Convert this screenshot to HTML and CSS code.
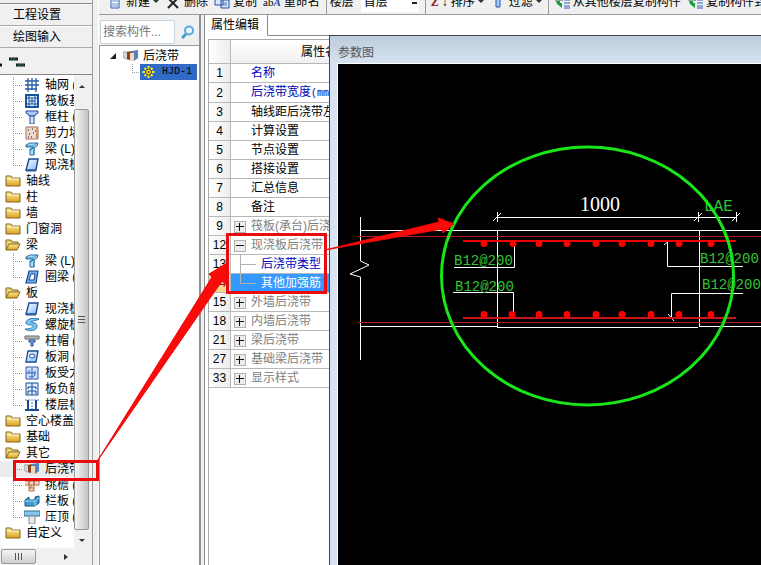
FILE: index.html
```html
<!DOCTYPE html>
<html lang="zh-CN">
<head>
<meta charset="utf-8">
<title>属性编辑</title>
<link rel="stylesheet" href="styles.css">
</head>
<body>
<svg class="defs" aria-hidden="true">
  <defs>
    <linearGradient id="gold" x1="0" y1="0" x2="0" y2="1"><stop offset="0" stop-color="#ffeea0"/><stop offset="1" stop-color="#d9a21c"/></linearGradient>
    <linearGradient id="sky" x1="0" y1="0" x2="1" y2="1"><stop offset="0" stop-color="#fff"/><stop offset="1" stop-color="#86b8f4"/></linearGradient>
    <symbol id="folder" viewBox="0 0 16 14"><path d="M1 12V2h5l1 2h8v8z" fill="url(#gold)" stroke="#80651a"/><path d="M2 5h12" stroke="#fff6c4"/></symbol>
    <symbol id="open" viewBox="0 0 16 14"><path d="M1 12V2h5l1 2h6v2" fill="#f4d775" stroke="#80651a"/><path d="M1 12l3-6h11l-3 6z" fill="url(#gold)" stroke="#80651a"/></symbol>
    <symbol id="grid" viewBox="0 0 14 14"><path d="M3 0v14M7 0v12M11 0v14M0 3h14M0 7h14M0 11h12" stroke="#2c5aa6" stroke-width="1.3" fill="none"/></symbol>
    <symbol id="raft" viewBox="0 0 14 14"><path d="M1 1h12v12H1z" fill="#e2efff" stroke="#17549c" stroke-width="2"/><path d="M4 1v12M10 1v12M1 4h12M1 10h12M7 4v6M4 7h6" stroke="#17549c"/></symbol>
    <symbol id="column" viewBox="0 0 14 14"><path d="M1 1h12v2l-3 2v1H4V5L1 3z" fill="#a6caf8" stroke="#244f94"/><path d="M5 6h4v8H5z" fill="#cfe2ff" stroke="#244f94"/></symbol>
    <symbol id="wall" viewBox="0 0 14 14"><path d="M1 1h12v12H1z" fill="#ead9d1" stroke="#a7745c"/><path d="M3 4h1M7 3h1M10 5h1M4 8h1M8 7h1M11 10h1M6 11h1M3 11h1" stroke="#64524b" stroke-width="1.3"/><path d="M12 2v10" stroke="#d66a28"/></symbol>
    <symbol id="beam" viewBox="0 0 14 14"><path d="M1 3l4-2h8l-1 3-3 2v7H5V7l3-2H1z" fill="#b0defa" stroke="#2b6d9d"/><path d="M1 4h7l4-3M5 9l4-4M9 6v7" fill="none" stroke="#2b7fbd"/></symbol>
    <symbol id="slab" viewBox="0 0 14 14"><path d="M4 1h9l-2 11H1z" fill="url(#sky)" stroke="#174b95" stroke-width="1.4"/><path d="M1 13h10" stroke="#174b95"/></symbol>
    <symbol id="ring" viewBox="0 0 14 14"><path d="M4 1h9l-2 12H1z" fill="#75adeb" stroke="#174b95" stroke-width="1.2"/><path d="M6 4h4L9 10H4z" fill="#fff" stroke="#174b95"/></symbol>
    <symbol id="spiral" viewBox="0 0 16 14"><path d="M15 1C8-1 1 2 2 5s7 1 7 3-4 3-8 3c4 3 12 2 12-3 0-4-6-3-6-4s4-1 8-3z" fill="#7ac7f3" stroke="#267bb3"/></symbol>
    <symbol id="cap" viewBox="0 0 14 14"><path d="M0 2h14v3H0z" fill="#bbb" stroke="#666"/><path d="M4 6h6v2H8v4H6V8H4z" fill="#7fb0ee" stroke="#244f94"/></symbol>
    <symbol id="hole" viewBox="0 0 14 14"><path d="M3 1h10l-2 11H1z" fill="url(#sky)" stroke="#174b95" stroke-width="1.3"/><ellipse cx="7" cy="6" rx="2.5" ry="2" fill="#fff" stroke="#174b95"/></symbol>
    <symbol id="force" viewBox="0 0 14 14"><path d="M1 1h12v12H1z" fill="#cfe1ff" stroke="#2c5aa6"/><path d="M7 2v9M4 4v3M1 7h9M10 5v4q-3 4-6 1" fill="none" stroke="#2c5aa6"/></symbol>
    <symbol id="negative" viewBox="0 0 14 14"><path d="M1 1h12v12H1z" fill="#e0ecff" stroke="#174b95"/><path d="M7 1v12M3 5h8M3 9h8M3 5v2M11 5v2M3 9v3M11 9v3" stroke="#174b95"/></symbol>
    <symbol id="strip" viewBox="0 0 14 14"><path d="M0 12h14M3 2v9M11 2v9" stroke="#174b95" stroke-width="2"/><path d="M7 1v10M0 2h5M9 2h5" stroke="#4d82c8" stroke-dasharray="2 1"/></symbol>
    <symbol id="post" viewBox="0 0 16 14"><path d="M0 3h6v7H3L0 8z" fill="#d2d7de" stroke="#9aa4b2"/><path d="M4 3l5-1v10l-5-2z" fill="#8b3f18"/><path d="M8 2l7-1v8l-4 3H8z" fill="#5781ba"/><path d="M7 4h4v8H7z" fill="#f1d7bd"/></symbol>
    <symbol id="cornice" viewBox="0 0 14 14"><path d="M4 1h5v12H4zM0 3h14v4H0M4 10h5M4 3v4M9 3v4M6 7v3" fill="#f7ddce" stroke="#b76640"/></symbol>
    <symbol id="rail" viewBox="0 0 16 14"><path d="M1 6l4-3v3h6V3l4-1v7l-4 3H1z" fill="#3f9bd0" stroke="#15577f"/><path d="M1 7h10l4-3M11 7v5" fill="none" stroke="#9bdcff"/></symbol>
    <symbol id="coping" viewBox="0 0 16 14"><path d="M0 1h16v5H0z" fill="#83c4ef" stroke="#396c91"/><path d="M5 6h6v8H5z" fill="#e4e7ea" stroke="#7c8a96"/></symbol>
    <symbol id="gear" viewBox="0 0 12 12"><path d="M6 0v12M0 6h12M2 2l8 8M10 2l-8 8" stroke="#ffec1c" stroke-width="2"/><circle cx="6" cy="6" r="3" fill="#ffec1c" stroke="#3a3200"/><circle cx="6" cy="6" r="1" fill="#222"/></symbol>
    <symbol id="sheet" viewBox="0 0 12 14"><path d="M2 1h8v12H2z" fill="#fff" stroke="#2c5aa6"/><path d="M3 6h6M3 9h6M3 11h6" stroke="#5a8edc"/></symbol>
    <symbol id="cross" viewBox="0 0 12 14"><path d="M1 13L11 3M2 4l9 9" stroke="#222" stroke-width="2"/></symbol>
    <symbol id="copy" viewBox="0 0 16 14"><path d="M1 2h8v8H1zM7 5h8v8H7z" fill="#d8e8ff" stroke="#274f9c"/><path d="M9 8h4M9 10h4" stroke="#4c7cc8"/></symbol>
    <symbol id="floors" viewBox="0 0 16 14"><path d="M1 1h8v4H1z" fill="#d5e2ee" stroke="#456"/><path d="M2 6h4v2h2v5l-5-4z" fill="#16a03a"/><path d="M10 2h6M10 5h6M10 8h6M10 11h6M10 13h6" stroke="#2f66ba"/></symbol>
  </defs>
</svg>

<div class="app">
  <aside class="sidebar">
    <div class="strip"></div>
    <button class="section">工程设置</button>
    <button class="section">绘图输入</button>
    <div class="mini"><svg width="28" height="12" viewBox="0 0 28 12"><path d="M0 9h2M9 3h9M16 9h9" stroke="#111" stroke-width="3"/><path d="M10 3h7M17 9h7" stroke="#2b7f6c"/></svg></div>
    <div class="browser">
      <ul class="tree">
        <li class="leaf"><svg><use href="#grid"/></svg>轴网 (J)</li>
        <li class="leaf"><svg><use href="#raft"/></svg>筏板基础</li>
        <li class="leaf"><svg><use href="#column"/></svg>框柱 (Z)</li>
        <li class="leaf"><svg><use href="#wall"/></svg>剪力墙</li>
        <li class="leaf"><svg><use href="#beam"/></svg>梁 (L)</li>
        <li class="leaf last"><svg><use href="#slab"/></svg>现浇板</li>
        <li><svg><use href="#folder"/></svg>轴线</li>
        <li><svg><use href="#folder"/></svg>柱</li>
        <li><svg><use href="#folder"/></svg>墙</li>
        <li><svg><use href="#folder"/></svg>门窗洞</li>
        <li><svg><use href="#open"/></svg>梁</li>
        <li class="leaf"><svg><use href="#beam"/></svg>梁 (L)</li>
        <li class="leaf last"><svg><use href="#ring"/></svg>圈梁 (E)</li>
        <li><svg><use href="#open"/></svg>板</li>
        <li class="leaf"><svg><use href="#slab"/></svg>现浇板</li>
        <li class="leaf"><svg><use href="#spiral"/></svg>螺旋板</li>
        <li class="leaf"><svg><use href="#cap"/></svg>柱帽 (V)</li>
        <li class="leaf"><svg><use href="#hole"/></svg>板洞 (N)</li>
        <li class="leaf"><svg><use href="#force"/></svg>板受力筋</li>
        <li class="leaf"><svg><use href="#negative"/></svg>板负筋</li>
        <li class="leaf last"><svg><use href="#strip"/></svg>楼层板带</li>
        <li><svg><use href="#folder"/></svg>空心楼盖</li>
        <li><svg><use href="#folder"/></svg>基础</li>
        <li><svg><use href="#open"/></svg>其它</li>
        <li class="leaf current"><svg><use href="#post"/></svg>后浇带</li>
        <li class="leaf"><svg><use href="#cornice"/></svg>挑檐 (T)</li>
        <li class="leaf"><svg><use href="#rail"/></svg>栏板 (K)</li>
        <li class="leaf last"><svg><use href="#coping"/></svg>压顶 (Y)</li>
        <li><svg><use href="#folder"/></svg>自定义</li>
      </ul>
      <div class="vbar"><i class="up"></i><span class="vthumb"><b></b></span><i class="down"></i></div>
    </div>
    <div class="hbar"><span class="hthumb"><b></b></span><i class="right"></i></div>
  </aside>

  <div class="main">
    <div class="toolbar">
      <button><svg><use href="#sheet"/></svg>新建<i class="down"></i></button>
      <button><svg><use href="#cross"/></svg>删除</button>
      <button><svg><use href="#copy"/></svg>复制</button>
      <button><span class="ab">ab<em>A</em></span>重命名</button>
      <label class="floor">楼层<select><option>首层</option></select></label>
      <button class="group"><span class="z">Z</span><b class="sort">↓</b>排序<i class="down"></i></button>
      <button><svg viewBox="0 0 16 14"><path d="M6 0h4v12H6z" fill="#a9caff" stroke="#2452a5"/></svg>过滤<i class="down"></i></button>
      <button class="group"><svg><use href="#floors"/></svg>从其他楼层复制构件</button>
      <button><svg><use href="#floors"/></svg>复制构件到其他楼层</button>
    </div>
    <div class="panes">
      <section class="components">
        <div class="search">
          <input type="text" placeholder="搜索构件..." aria-label="搜索构件">
          <button aria-label="搜索"><svg width="14" height="14" viewBox="0 0 14 14"><circle cx="8" cy="5.5" r="4" fill="#eaf6ff" stroke="#55a9e0" stroke-width="2"/><path d="M5 9l-4 4" stroke="#4b9bd3" stroke-width="3"/></svg></button>
        </div>
        <div class="list">
          <div class="parent"><svg class="tri" viewBox="0 0 6 6"><path d="M6 0v6H0z" fill="#222"/></svg><svg><use href="#post"/></svg>后浇带</div>
          <div class="child"><span><svg><use href="#gear"/></svg>HJD-1</span></div>
        </div>
      </section>
      <section class="props">
        <div class="tabs"><button>属性编辑</button></div>
        <div class="sheet">
          <table>
            <thead><tr><th></th><th>属性名</th></tr></thead>
            <tbody>
              <tr><th>1</th><td class="key">名称</td></tr>
              <tr><th>2</th><td class="key">后浇带宽度<span class="unit">(mm)</span></td></tr>
              <tr><th>3</th><td>轴线距后浇带左边线</td></tr>
              <tr><th>4</th><td>计算设置</td></tr>
              <tr><th>5</th><td>节点设置</td></tr>
              <tr><th>6</th><td>搭接设置</td></tr>
              <tr><th>7</th><td>汇总信息</td></tr>
              <tr><th>8</th><td>备注</td></tr>
              <tr><th>9</th><td class="fold"><button class="plus" aria-label="展开"></button>筏板(承台)后浇带</td></tr>
              <tr><th>12</th><td class="fold"><button class="minus" aria-label="折叠"></button>现浇板后浇带</td></tr>
              <tr><th>13</th><td class="sub key">后浇带类型</td></tr>
              <tr class="active"><th>14</th><td class="sub end">其他加强筋</td></tr>
              <tr><th>15</th><td class="fold"><button class="plus" aria-label="展开"></button>外墙后浇带</td></tr>
              <tr><th>18</th><td class="fold"><button class="plus" aria-label="展开"></button>内墙后浇带</td></tr>
              <tr><th>21</th><td class="fold"><button class="plus" aria-label="展开"></button>梁后浇带</td></tr>
              <tr><th>27</th><td class="fold"><button class="plus" aria-label="展开"></button>基础梁后浇带</td></tr>
              <tr><th>33</th><td class="fold"><button class="plus" aria-label="展开"></button>显示样式</td></tr>
            </tbody>
          </table>
        </div>
      </section>
    </div>
  </div>
</div>

<section class="dialog">
  <h2>参数图</h2>
  <div class="canvas">
    <svg width="423" height="501" viewBox="338 64 423 501">
      <g class="white">
        <path d="M360.500 217V261L369 265L350 274L360.500 277V360"/>
        <path d="M360 230.500H761M360 326.500H497M497 327.500H698M700 326.500H761M497.500 231V327M699.500 231V327"/>
        <path d="M497 217.500H736M497.500 212V222M698.500 212V222M736.500 212V222M493 221l8-8M694 221l8-8M732 221l8-8"/>
        <path d="M454 267.500H514.500V246M453 292.500H513.500V313M743 266.500H667.500V242M664 245l6-5M743 293.500H671.500V318M668 314l6 7"/>
      </g>
      <path d="M358 236.500H761M358 322.500H761" stroke="#b01c1c"/>
      <path d="M463 241H736" stroke="#f00000" stroke-width="2"/>
      <path d="M463 318H736" stroke="#cc1616" stroke-width="2"/>
      <path class="dots" d="M484 243.500h0M513 243.500h0M539 243.500h0M567 243.500h0M596 243.500h0M622 243.500h0M651 243.500h0M679 243.500h0M711 243.500h0M484 314.500h0M512 314.500h0M539 314.500h0M567 314.500h0M596 314.500h0M622 314.500h0M651 314.500h0M679 314.500h0M711 314.500h0"/>
      <text class="dim" x="580" y="211">1000</text>
      <g class="bars">
        <text class="anchor" x="704" y="211">LAE</text>
        <text x="454" y="265">B12@200</text>
        <text x="455" y="291">B12@200</text>
        <text x="700" y="263">B12@200</text>
        <text x="702" y="289">B12@200</text>
      </g>
    </svg>
  </div>
</section>

<svg class="marks" width="761" height="565" viewBox="0 0 761 565" aria-hidden="true">
  <ellipse cx="587.500" cy="276" rx="146" ry="129" fill="none" stroke="#19e619" stroke-width="3"/>
  <path d="M14.500 461.500h83v18h-83zM227.500 234.500h98v58h-98z" fill="none" stroke="#e80c0c" stroke-width="3"/>
  <path d="M98 460L212 277l-3-3 18-11-1 21-4-3z" fill="#fb0a0a" stroke="#f00808"/>
  <path d="M325 250L439 222l-1-4 16 6-11 9-1-4z" fill="#fb0a0a" stroke="#f00808"/>
</svg>
</body>
</html>
```

FILE: styles.css
```css
* { box-sizing: border-box; }
html, body { height: 100%; }
body {
  margin: 0;
  overflow: hidden;
  background: #f0f0f0;
  color: #000;
  font: 12px/16px "Liberation Sans", "Noto Sans CJK SC", sans-serif;
}
button, input, select { font: inherit; color: inherit; margin: 0; }
button { border: 0; padding: 0; background: none; }
.defs { position: absolute; width: 0; height: 0; }
.app { display: flex; height: 100vh; }

i.up, i.down, i.right { display: block; width: 0; height: 0; border: 3px solid transparent; }
i.up { border-bottom-color: #333; border-top: 0; }
i.down { border-top-color: #333; border-bottom: 0; }
i.right { border-left: 4px solid #333; border-right: 0; }

.sidebar {
  display: flex;
  flex-direction: column;
  flex: none;
  width: 93px;
  border-right: 1px solid #a0a0a0;
}
.strip { height: 4px; border-bottom: 1px solid #888; }
.section {
  height: 22px;
  padding-left: 13px;
  text-align: left;
  border-top: 1px solid #fff;
  border-bottom: 1px solid #aaa;
  background: #f0f0f0;
}
.mini { height: 27px; padding-top: 8px; border-bottom: 1px solid #888; }
.mini svg { display: block; }
.browser { display: flex; flex: 1; min-height: 0; background: #fff; }
.tree {
  flex: 1;
  min-width: 0;
  margin: 0;
  padding: 2px 0 0;
  list-style: none;
  overflow: hidden;
}
.tree li {
  display: flex;
  align-items: center;
  gap: 5px;
  height: 16px;
  padding-left: 5px;
  white-space: nowrap;
}
.tree svg { flex: none; width: 16px; height: 14px; }
.tree .leaf {
  padding-left: 24px;
  background:
    repeating-linear-gradient(#999 0 1px, transparent 1px 2px) 13px 0 / 1px 100% no-repeat,
    repeating-linear-gradient(90deg, #999 0 1px, transparent 1px 2px) 13px 8px / 10px 1px no-repeat;
}
.tree .last { background-size: 1px 8px, 10px 1px; }
.tree .current { background-color: #ececec; }
.vbar {
  display: flex;
  flex-direction: column;
  align-items: center;
  flex: none;
  width: 18px;
  padding: 10px 3px 6px 0;
  background: #f0f0f0;
}
.vthumb, .hthumb {
  display: flex;
  align-items: center;
  justify-content: center;
  border: 1px solid #999;
  border-radius: 2px;
}
.vthumb { flex: 1; width: 15px; margin: 21px 0 9px; background: linear-gradient(90deg, #f6f6f6, #c4c4c8); }
.vthumb b { width: 7px; height: 8px; background: repeating-linear-gradient(#555 0 1px, transparent 1px 3px); }
.hbar {
  display: flex;
  align-items: center;
  justify-content: space-between;
  height: 17px;
  padding: 0 24px 0 1px;
}
.hthumb { width: 35px; height: 15px; background: linear-gradient(#f6f6f6, #cfcfd3); }
.hthumb b { width: 8px; height: 7px; background: repeating-linear-gradient(90deg, #555 0 1px, transparent 1px 3px); }

.main {
  display: flex;
  flex-direction: column;
  flex: 1;
  min-width: 0;
  margin-left: 5px;
  border-left: 1px solid #fff;
}
.toolbar {
  display: flex;
  align-items: flex-end;
  gap: 6px;
  height: 15px;
  padding-left: 8px;
  overflow: hidden;
  border-bottom: 1px solid #999;
}
.toolbar button, .toolbar label {
  display: flex;
  align-items: center;
  flex: none;
  gap: 3px;
  height: 25px;
  white-space: nowrap;
}
.toolbar svg { width: 16px; height: 14px; }
.toolbar .group { border-left: 1px solid #999; padding-left: 5px; }
.toolbar .floor { border-left: 1px solid #999; padding-left: 3px; gap: 7px; }
.toolbar select {
  appearance: none;
  width: 58px;
  height: 20px;
  padding: 0 3px;
  border: 0;
  border-radius: 0;
  background: linear-gradient(#222, #222) 51px 10px / 5px 2px no-repeat #fff;
}
.ab { font: 11px/16px "Liberation Serif", serif; }
.ab em { color: #2452a5; font-weight: bold; }
.z { color: #8c2020; font: bold 12px/16px "Liberation Serif", serif; }
.sort { width: 6px; }

.panes { display: flex; flex: 1; min-height: 0; }
.components {
  display: flex;
  flex-direction: column;
  flex: none;
  width: 102px;
  padding-top: 5px;
  border-right: 2px solid #909096;
}
.search { display: flex; align-items: center; height: 25px; gap: 6px; padding: 0 0 1px 1px; }
.search input {
  width: 75px;
  height: 24px;
  padding: 0 2px;
  border: 1px solid #c5d3df;
  border-radius: 2px;
  background: #fff;
}
.search input::placeholder { color: #777; opacity: 1; }
.search button { height: 14px; }
.search svg { display: block; }
.list {
  flex: 1;
  padding-top: 2px;
  border-top: 1px solid #999;
  border-left: 1px solid #999;
  background: #fff;
}
.list svg { flex: none; width: 16px; height: 14px; }
.list .tri { width: 6px; height: 6px; margin-right: 3px; }
.parent { display: flex; align-items: center; gap: 4px; height: 16px; padding-left: 10px; }
.child {
  display: flex;
  height: 16px;
  padding-left: 40px;
  background:
    repeating-linear-gradient(#999 0 1px, transparent 1px 2px) 32px 0 / 1px 8px no-repeat,
    repeating-linear-gradient(90deg, #999 0 1px, transparent 1px 2px) 32px 8px / 8px 1px no-repeat;
}
.child span {
  display: flex;
  align-items: center;
  gap: 5px;
  width: 57px;
  background: #316ac5;
  font: 10px/16px "Liberation Mono", monospace;
}
.child svg { width: 17px; height: 12px; }

.props {
  display: flex;
  flex-direction: column;
  flex: 1;
  min-width: 0;
  margin-left: 3px;
  border-left: 1px solid #888;
  background: #fff;
}
.tabs { display: flex; height: 21px; border-bottom: 1px solid #888; }
.tabs button {
  height: 21px;
  padding: 0 8px 0 6px;
  border-right: 1px solid #888;
  border-bottom: 1px solid #fff;
  background: #fff;
}
.sheet { flex: 1; margin: 3px 0 0 3px; border-top: 1px solid #aaa; border-left: 1px solid #aaa; }
table { width: 220px; border-collapse: separate; border-spacing: 0; table-layout: fixed; }
th, td {
  height: 19px;
  padding: 0;
  border-bottom: 1px solid #b8b8b8;
  white-space: nowrap;
  line-height: 18px;
}
th { font-weight: normal; }
th:first-child {
  width: 22px;
  border-right: 1px solid #b8b8b8;
  background: linear-gradient(90deg, #fff, #ededed);
}
thead th { height: 24px; background: linear-gradient(#fff, #f0f0f0); }
thead th:last-child { padding-left: 70px; text-align: left; }
td { padding-left: 20px; }
.unit { font: 10px/16px "Liberation Mono", monospace; }
.key { color: #0000b8; }
.fold { padding-left: 3px; color: #808080; }
.fold button {
  width: 12px;
  height: 12px;
  margin-right: 5px;
  vertical-align: -2px;
  border: 1px solid #b0b0b0;
  color: #111;
}
.plus {
  background:
    linear-gradient(#111, #111) 1px 4px / 8px 1px no-repeat,
    linear-gradient(#111, #111) 4px 1px / 1px 8px no-repeat, #ececec;
}
.minus { background: linear-gradient(#111, #111) 1px 4px / 8px 1px no-repeat, #ececec; }
.sub {
  padding-left: 30px;
  background:
    linear-gradient(#b0b0b0, #b0b0b0) 9px 0 / 1px 100% no-repeat,
    linear-gradient(#b0b0b0, #b0b0b0) 9px 9px / 16px 1px no-repeat;
}
.sub.end { background-size: 1px 10px, 16px 1px; background-color: #3399ff; color: #fff; }
.active th:first-child { background: #ffd58c; color: #902020; }

.dialog {
  position: absolute;
  top: 35px;
  right: 0;
  bottom: 0;
  left: 329px;
  display: flex;
  flex-direction: column;
  padding-left: 7px;
  border-top: 1px solid #3e4a57;
  border-left: 1px solid #3e4a57;
  background: linear-gradient(#bccbda, #d7e3f1 27px);
}
.dialog h2 { margin: 0; height: 27px; padding: 9px 0 0 1px; color: #555; font-size: 12px; font-weight: normal; line-height: 16px; }
.canvas { flex: 1; min-height: 0; overflow: hidden; border-top: 1px solid #fff; border-left: 1px solid #fff; background: #000; }
.canvas svg { display: block; }
.white path { fill: none; stroke: #fff; }
.dots { stroke: #f00; stroke-width: 7px; stroke-linecap: round; }
.dim { fill: #fff; font: 20px "Liberation Serif", serif; }
.bars { fill: #33c433; font: 14px "Liberation Mono", monospace; }
.anchor { font-size: 16px; }
.marks { position: absolute; top: 0; left: 0; pointer-events: none; }
```
